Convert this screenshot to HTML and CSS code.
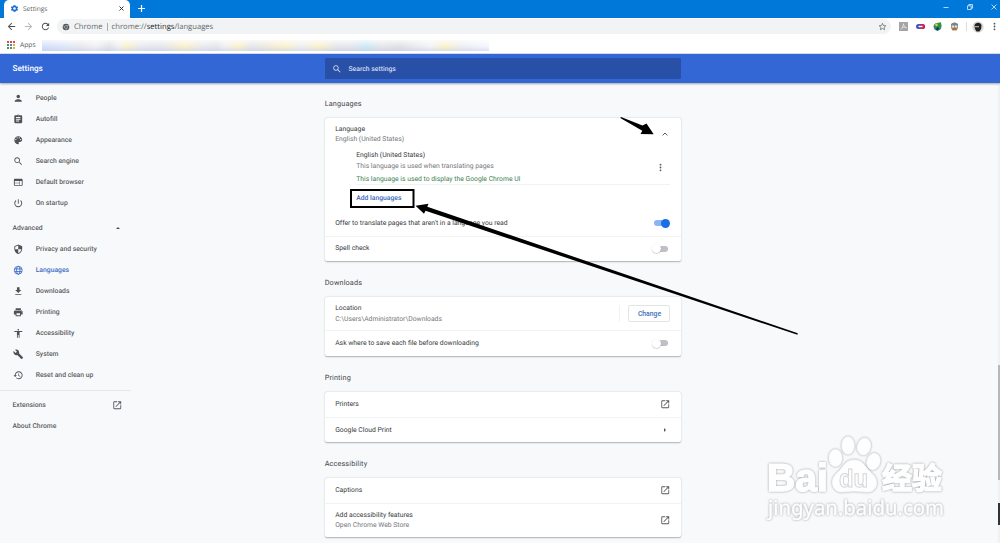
FILE: index.html
```html
<!DOCTYPE html>
<html lang="en">
<head>
  <meta charset="UTF-8">
  <title>Settings</title>
  <link rel="stylesheet" href="styles.css">
</head>
<body>
  <!-- icons -->
  <svg class="defs">
    <symbol id="person" viewBox="0 0 24 24"><path d="M12 12c2.21 0 4-1.79 4-4s-1.79-4-4-4-4 1.79-4 4 1.79 4 4 4zm0 2c-2.67 0-8 1.34-8 4v2h16v-2c0-2.66-5.33-4-8-4z"/></symbol>
    <symbol id="autofill" viewBox="0 0 24 24"><path d="M19 3h-4.18C14.4 1.84 13.3 1 12 1s-2.400.84-2.820 2H5c-1.100 0-2 .9-2 2v14c0 1.100.9 2 2 2h14c1.100 0 2-.9 2-2V5c0-1.100-.9-2-2-2zm-7 0c.55 0 1 .45 1 1s-.45 1-1 1-1-.45-1-1 .45-1 1-1zm2 14H7v-2h7v2zm3-4H7v-2h10v2zm0-4H7V7h10v2z"/></symbol>
    <symbol id="palette" viewBox="0 0 24 24"><path d="M12 3c-4.970 0-9 4.030-9 9s4.030 9 9 9c.83 0 1.500-.67 1.500-1.500 0-.39-.15-.74-.39-1.010-.23-.26-.38-.61-.38-.99 0-.83.67-1.500 1.500-1.500H16c2.760 0 5-2.240 5-5 0-4.420-4.030-8-9-8zm-5.500 9c-.83 0-1.500-.67-1.500-1.500S5.670 9 6.500 9 8 9.670 8 10.500 7.330 12 6.500 12zm3-4C8.670 8 8 7.330 8 6.500S8.670 5 9.500 5s1.500.67 1.500 1.500S10.330 8 9.500 8zm5 0c-.83 0-1.500-.67-1.500-1.500S13.670 5 14.500 5s1.500.67 1.500 1.500S15.330 8 14.500 8zm3 4c-.83 0-1.500-.67-1.500-1.500S16.670 9 17.500 9s1.500.67 1.500 1.500-.67 1.500-1.500 1.500z"/></symbol>
    <symbol id="search" viewBox="0 0 24 24"><path d="M15.500 14h-.79l-.28-.27C15.410 12.590 16 11.110 16 9.500 16 5.910 13.090 3 9.500 3S3 5.910 3 9.500 5.910 16 9.500 16c1.610 0 3.090-.59 4.230-1.570l.27.28v.79l5 4.990L20.490 19l-4.990-5zm-6 0C7.010 14 5 11.990 5 9.500S7.010 5 9.500 5 14 7.010 14 9.500 11.990 14 9.500 14z"/></symbol>
    <symbol id="browser" viewBox="0 0 24 24"><path d="M20 4H4c-1.100 0-2 .9-2 2v12c0 1.100.9 2 2 2h16c1.100 0 2-.9 2-2V6c0-1.100-.9-2-2-2zm-5 14H4v-4h11v4zm0-5H4V9h11v4zm5 5h-4V9h4v9z"/></symbol>
    <symbol id="power" viewBox="0 0 24 24"><path d="M13 3h-2v10h2V3zm4.830 2.170l-1.420 1.420C17.990 7.860 19 9.810 19 12c0 3.870-3.130 7-7 7s-7-3.130-7-7c0-2.190 1.010-4.140 2.580-5.420L6.170 5.170C4.230 6.820 3 9.260 3 12c0 4.970 4.030 9 9 9s9-4.030 9-9c0-2.740-1.230-5.180-3.170-6.830z"/></symbol>
    <symbol id="shield" viewBox="0 0 24 24"><path d="M12 1L3 5v6c0 5.550 3.840 10.740 9 12 5.160-1.260 9-6.450 9-12V5l-9-4zm0 10.990h7c-.53 4.120-3.280 7.790-7 8.940V12H5V6.300l7-3.110v8.800z"/></symbol>
    <symbol id="globe" viewBox="0 0 24 24"><g fill="none" stroke="currentColor" stroke-width="2"><circle cx="12" cy="12" r="9"/><ellipse cx="12" cy="12" rx="4" ry="9"/><path d="M3.500 9h17M3.500 15h17"/></g></symbol>
    <symbol id="download" viewBox="0 0 24 24"><path d="M19 9h-4V3H9v6H5l7 7 7-7zM5 18v2h14v-2H5z"/></symbol>
    <symbol id="print" viewBox="0 0 24 24"><path d="M19 8H5c-1.660 0-3 1.340-3 3v6h4v4h12v-4h4v-6c0-1.660-1.340-3-3-3zm-3 11H8v-5h8v5zm3-7c-.55 0-1-.45-1-1s.45-1 1-1 1 .45 1 1-.45 1-1 1zm-1-9H6v4h12V3z"/></symbol>
    <symbol id="access" viewBox="0 0 24 24"><path d="M12 2c1.100 0 2 .9 2 2s-.9 2-2 2-2-.9-2-2 .9-2 2-2zm9 7h-6v13h-2v-6h-2v6H9V9H3V7h18v2z"/></symbol>
    <symbol id="wrench" viewBox="0 0 24 24"><path d="M22.700 19l-9.100-9.100c.9-2.300.4-5-1.500-6.900-2-2-5-2.400-7.400-1.300L9 6 6 9 1.600 4.700C.4 7.100.9 10.100 2.900 12.100c1.900 1.900 4.600 2.400 6.900 1.500l9.100 9.100c.4.4 1 .4 1.400 0l2.300-2.300c.5-.4.5-1.100.1-1.400z"/></symbol>
    <symbol id="restore" viewBox="0 0 24 24"><path d="M13 3c-4.970 0-9 4.030-9 9H1l3.890 3.890.07.14L9 12H6c0-3.870 3.130-7 7-7s7 3.130 7 7-3.130 7-7 7c-1.930 0-3.680-.79-4.940-2.060l-1.420 1.420C8.270 19.990 10.510 21 13 21c4.970 0 9-4.030 9-9s-4.030-9-9-9zm-1 5v5l4.280 2.540.72-1.210-3.500-2.080V8H12z"/></symbol>
    <symbol id="launch" viewBox="0 0 24 24"><path d="M19 19H5V5h7V3H5c-1.110 0-2 .9-2 2v14c0 1.100.89 2 2 2h14c1.100 0 2-.9 2-2v-7h-2v7zM14 3v2h3.590l-9.830 9.830 1.410 1.410L19 6.410V10h2V3h-7z"/></symbol>
    <symbol id="dots" viewBox="0 0 24 24"><circle cx="12" cy="4.500" r="2.400"/><circle cx="12" cy="12" r="2.400"/><circle cx="12" cy="19.500" r="2.400"/></symbol>
    <symbol id="back" viewBox="0 0 24 24"><path d="M20 11H7.830l5.590-5.590L12 4l-8 8 8 8 1.410-1.410L7.830 13H20v-2z"/></symbol>
    <symbol id="reload" viewBox="0 0 24 24"><path d="M17.650 6.350C16.200 4.900 14.210 4 12 4c-4.420 0-7.990 3.580-7.990 8s3.570 8 7.990 8c3.730 0 6.840-2.550 7.730-6h-2.080c-.82 2.330-3.040 4-5.650 4-3.310 0-6-2.690-6-6s2.690-6 6-6c1.660 0 3.140.69 4.220 1.780L13 11h7V4l-2.350 2.350z"/></symbol>
    <symbol id="star" viewBox="0 0 24 24"><path d="M12 3.500l2.500 5.900 6.500.6-4.900 4.300 1.500 6.300-5.600-3.400-5.600 3.400 1.500-6.300L3 10l6.500-.6z" fill="none" stroke="currentColor" stroke-width="2"/></symbol>
    <symbol id="gear" viewBox="0 0 24 24"><path fill-rule="evenodd" d="M19.400 13a7.500 7.500 0 0 0 0-2l2.100-1.600-2-3.500-2.500 1a7.300 7.300 0 0 0-1.700-1L15 3.200h-6l-.4 2.700a7.300 7.300 0 0 0-1.700 1l-2.500-1-2 3.500L4.600 11a7.500 7.500 0 0 0 0 2l-2.200 1.600 2 3.500 2.500-1a7.300 7.300 0 0 0 1.700 1l.4 2.700h6l.4-2.700a7.300 7.300 0 0 0 1.700-1l2.500 1 2-3.500zM12 15.500a3.500 3.500 0 1 1 0-7 3.500 3.500 0 0 1 0 7z"/></symbol>
    <symbol id="chrome" viewBox="0 0 24 24"><circle cx="12" cy="12" r="10"/><circle cx="12" cy="12" r="4.500" fill="none" stroke="#c4c7ca" stroke-width="1.500"/><path d="M12 7.500h9M8 14.500L4 7M16 14.500L11.500 22" stroke="#c4c7ca" stroke-width="1.500"/></symbol>
  </svg>

  <div class="tabstrip">
    <div class="tab">
      <svg class="tab-icon"><use href="#gear"/></svg>
      <span>Settings</span>
      <svg class="tab-close" viewBox="0 0 5 5"><path d="M.5 .5l4 4M4.500 .5l-4 4"/></svg>
    </div>
    <svg class="new-tab" viewBox="0 0 7 7"><path d="M3.500 0v7M0 3.500h7"/></svg>
    <div class="window-buttons">
      <svg viewBox="0 0 6 6"><path d="M.5 3.500h5"/></svg>
      <svg viewBox="0 0 6 6"><path d="M.5 1.800h3.700v3.700H.5zM1.800 1.800V.5h3.700v3.700H4.200"/></svg>
      <svg viewBox="0 0 6 6"><path d="M.5 .5l5 5M5.500 .5l-5 5"/></svg>
    </div>
  </div>

  <div class="toolbar">
    <svg class="nav-icon"><use href="#back"/></svg>
    <svg class="nav-icon forward"><use href="#back"/></svg>
    <svg class="nav-icon"><use href="#reload"/></svg>
    <div class="omnibox">
      <svg class="site-icon"><use href="#chrome"/></svg>
      <span class="site">Chrome</span>
      <span class="url">chrome://<b>settings</b>/languages</span>
      <svg class="star"><use href="#star"/></svg>
    </div>
    <div class="extensions">
      <svg viewBox="0 0 9 9"><path fill="#a5a5a5" d="M0 0h9v9H0z"/><path d="M4.300 1.500c.5 2.800 1.500 4 3.400 4.600M4.500 2C4.300 4 3.300 6.300 1.700 7.500M2.800 5.700c1.500-.7 3-.8 4.700-.2" fill="none" stroke="#eee" stroke-width=".7"/></svg>
      <svg viewBox="0 0 9 9"><rect y="2" width="9" height="5" rx="2.500" fill="#3d55b8"/><path fill="#d51e55" d="M4.500 2h2a2.500 2.500 0 0 1 0 5h-2z"/><path d="M2.500 4.500h4" stroke="#fff" stroke-width="1.400"/></svg>
      <svg viewBox="0 0 9 9"><circle cx="4.500" cy="4.800" r="3.800" fill="#3478a8"/><path fill="#2c9440" d="M4 1l4-.7.600 4L6 8 4.500 5 1.500 6 .5 4z"/><path fill="#e7cd45" d="M2 2.500l2-1.300 1 2-2 1.300z"/><path fill="#183a35" d="M4 5l2 1-1 2.800L3 8z"/></svg>
      <svg viewBox="0 0 9 9"><path fill="#b98657" d="M1 2l3.500-1.500L8 2v4L6.500 8.500h-4L1 6z"/><path fill="#69899c" d="M1 2.500C2 .3 7 .3 8 2.500v1.200H1z"/><circle cx="3" cy="4.500" r="1.200" fill="#ddd"/><circle cx="6" cy="4.500" r="1.200" fill="#ddd"/><path d="M2.500 7h4" stroke="#765" /></svg>
    </div>
    <svg class="avatar" viewBox="0 0 12 12"><circle cx="6" cy="6" r="5.700" fill="#d8d9db"/><path fill="#222" d="M2.500 5c0-4 6.500-4.500 7-.5l-.3 3L7.500 10.500h-3L3 8z"/><path fill="#b99e88" d="M3 5h4v1.300H3z"/></svg>
    <svg class="menu"><use href="#dots"/></svg>
  </div>

  <div class="bookmarks">
    <svg class="apps" viewBox="0 0 8 8"><path fill="#d94e45" d="M0 0h2v2H0zM3 0h2v2H3zM6 0h2v2H6z"/><path fill="#43985f" d="M0 3h2v2H0zM0 6h2v2H0z"/><path fill="#4b7ed6" d="M3 3h2v2H3z"/><path fill="#dfb13b" d="M6 3h2v2H6zM6 6h2v2H6z"/><path fill="#43985f" d="M3 6h2v2H3z"/></svg>
    <span>Apps</span>
    <div class="hidden-links"></div>
  </div>

  <div class="header">
    <h1>Settings</h1>
    <div class="searchbox">
      <svg><use href="#search"/></svg>
      <span>Search settings</span>
    </div>
  </div>

  <div class="page">
    <div class="sidebar">
      <a class="item"><svg><use href="#person"/></svg>People</a>
      <a class="item"><svg><use href="#autofill"/></svg>Autofill</a>
      <a class="item"><svg><use href="#palette"/></svg>Appearance</a>
      <a class="item"><svg><use href="#search"/></svg>Search engine</a>
      <a class="item"><svg><use href="#browser"/></svg>Default browser</a>
      <a class="item"><svg><use href="#power"/></svg>On startup</a>
      <div class="advanced">Advanced <i class="up"></i></div>
      <a class="item"><svg><use href="#shield"/></svg>Privacy and security</a>
      <a class="item selected"><svg><use href="#globe"/></svg>Languages</a>
      <a class="item"><svg><use href="#download"/></svg>Downloads</a>
      <a class="item"><svg><use href="#print"/></svg>Printing</a>
      <a class="item"><svg><use href="#access"/></svg>Accessibility</a>
      <a class="item"><svg><use href="#wrench"/></svg>System</a>
      <a class="item"><svg><use href="#restore"/></svg>Reset and clean up</a>
      <div class="more">
        <a class="link">Extensions <svg><use href="#launch"/></svg></a>
        <a class="link">About Chrome</a>
      </div>
    </div>

    <div class="main">
      <h2>Languages</h2>
      <div class="card languages">
        <div class="row language">
          <div>
            <p>Language</p>
            <p class="sub">English (United States)</p>
          </div>
          <svg class="collapse" viewBox="0 0 6 4"><path d="M.6 3.400L3 1l2.400 2.400"/></svg>
        </div>
        <div class="nested">
          <div class="nested-row">
            <div>
              <p>English (United States)</p>
              <p class="sub">This language is used when translating pages</p>
              <p class="green">This language is used to display the Google Chrome UI</p>
            </div>
            <svg class="more-dots"><use href="#dots"/></svg>
          </div>
          <a class="add">Add languages</a>
        </div>
        <div class="row">
          <p>Offer to translate pages that aren't in a language you read</p>
          <div class="toggle on"></div>
        </div>
        <div class="row line">
          <p>Spell check</p>
          <div class="toggle"></div>
        </div>
      </div>

      <h2>Downloads</h2>
      <div class="card">
        <div class="row tall">
          <div>
            <p>Location</p>
            <p class="sub">C:\Users\Administrator\Downloads</p>
          </div>
          <div class="change"><button>Change</button></div>
        </div>
        <div class="row line">
          <p>Ask where to save each file before downloading</p>
          <div class="toggle"></div>
        </div>
      </div>

      <h2>Printing</h2>
      <div class="card">
        <div class="row"><p>Printers</p><svg class="launch"><use href="#launch"/></svg></div>
        <div class="row line"><p>Google Cloud Print</p><i class="right"></i></div>
      </div>

      <h2>Accessibility</h2>
      <div class="card">
        <div class="row"><p>Captions</p><svg class="launch"><use href="#launch"/></svg></div>
        <div class="row tall line">
          <div>
            <p>Add accessibility features</p>
            <p class="sub">Open Chrome Web Store</p>
          </div>
          <svg class="launch"><use href="#launch"/></svg>
        </div>
      </div>
    </div>

    <div class="scrollbar"><div class="thumb"></div><div class="mark"></div></div>
  </div>

  <!-- arrows and watermark over the page -->
  <svg class="overlay" viewBox="0 0 1000 543">
    <rect x="351" y="190" width="62.500" height="17" fill="none" stroke="#000" stroke-width="2"/>
    <path d="M415.500 205.700l13-2-1.200 3 370.500 126.600-.4 1.500L425.500 210.800l-1.500 3z"/>
    <path d="M621 117l21.500 8.600 4-2.200 7.200 10.800-13.200-.2 1.800-3.200-22-12.800z"/>
    <g class="watermark">
      <text x="767" y="491" font-size="39" textLength="61" lengthAdjust="spacingAndGlyphs" class="bold">Bai</text>
      <ellipse cx="835.500" cy="458" rx="6.500" ry="8.500"/>
      <ellipse cx="848" cy="445.500" rx="6.200" ry="8.700"/>
      <ellipse cx="864" cy="446.500" rx="6.500" ry="8.500" transform="rotate(12 864 446.500)"/>
      <ellipse cx="873.500" cy="461.500" rx="6.500" ry="8.200" transform="rotate(15 873.500 461.500)"/>
      <path d="M854 460c8 0 10 5 14 9.500s8.500 7 8.500 13.500c0 6-4 9-9.500 9s-8-1-13-1-8 1-12 1c-6 0-9.500-4-9.500-9.500 0-7 5-9 8.500-13.500s6-9 13-9z"/>
      <text x="839" y="486.500" font-size="25" textLength="29" lengthAdjust="spacingAndGlyphs" class="bold du">du</text>
      <text x="882" y="488.500" font-size="30" textLength="60" lengthAdjust="spacingAndGlyphs" class="bold">经验</text>
      <text x="768" y="514.500" font-size="20.500" textLength="176" lengthAdjust="spacingAndGlyphs" class="site-name">jingyan.baidu.com</text>
    </g>
  </svg>
</body>
</html>
```

FILE: styles.css
```css
* {
  box-sizing: border-box;
}
body {
  margin: 0;
  width: 1000px;
  height: 543px;
  overflow: hidden;
  position: relative;
  background: #f8f9fb;
  font-family: Roboto, "Liberation Sans", sans-serif;
  font-size: 6.8px;
  color: #36393c;
  text-rendering: geometricPrecision;
}
h1, h2, p {
  margin: 0;
}
svg {
  flex: none;
  fill: currentColor;
}
.defs {
  position: absolute;
  width: 0;
  height: 0;
}

/* Browser window */
.tabstrip {
  display: flex;
  align-items: center;
  height: 17.500px;
  background: #0078d9;
  color: #fff;
}
.tab {
  display: flex;
  align-items: center;
  width: 126px;
  height: 18px;
  margin-left: 4px;
  padding: 0 6px;
  background: #fff;
  border-radius: 5px 5px 0 0;
  color: #55585b;
  font-family: "Open Sans", sans-serif;
  font-size: 6.6px;
}
.tab-icon {
  width: 9px;
  height: 9px;
  margin-right: 4px;
  color: #1a68d2;
}
.tab-close {
  width: 5px;
  height: 5px;
  margin-left: auto;
  stroke: #333;
}
.new-tab {
  width: 7px;
  height: 7px;
  margin-left: 8px;
  stroke: #fff;
  stroke-width: 1.2;
}
.window-buttons {
  display: flex;
  gap: 18px;
  margin: -3px 3.500px 0 auto;
}
.window-buttons svg {
  width: 6px;
  height: 6px;
  fill: none;
  stroke: #fff;
  stroke-width: .7;
}
.toolbar {
  display: flex;
  align-items: center;
  height: 18.500px;
  padding: 0 1px 0 6px;
  background: #fff;
  color: #4d5053;
}
.nav-icon {
  width: 11px;
  height: 11px;
  margin-right: 6px;
}
.forward {
  color: #b5b7b9;
  transform: scaleX(-1);
}
.omnibox {
  display: flex;
  align-items: center;
  width: 836px;
  height: 15px;
  padding: 0 4px 0 5px;
  border-radius: 8px;
  background: #f1f3f4;
  font-family: "Open Sans", sans-serif;
  font-size: 7.650px;
  color: #65686c;
}
.site-icon {
  width: 8px;
  height: 8px;
  margin-right: 4px;
  color: #55585b;
}
.site {
  padding-right: 4px;
  border-right: 1px solid #aaa;
  line-height: 8px;
}
.url {
  margin-left: 4px;
}
.url b {
  font-weight: 500;
  color: #25282b;
}
.star {
  width: 9px;
  height: 9px;
  margin-left: auto;
}
.extensions {
  display: flex;
  gap: 8px;
  margin-left: 8px;
  padding-right: 7px;
  border-right: 1px solid #ddd;
}
.extensions svg {
  width: 9px;
  height: 9px;
}
.avatar {
  width: 12px;
  height: 12px;
  margin-left: 5px;
}
.menu {
  width: 9px;
  height: 9px;
  margin-left: 6px;
}
.bookmarks {
  display: flex;
  align-items: center;
  height: 18px;
  padding-left: 7px;
  background: #fff;
  border-bottom: 1px solid #dce0e8;
  font-family: "Open Sans", sans-serif;
  font-size: 6.7px;
  color: #505356;
}
.apps {
  width: 8px;
  height: 8px;
  margin-right: 5px;
}
.hidden-links {
  width: 447px;
  height: 11px;
  margin: 1px 0 0 6px;
  background:
    linear-gradient(rgba(255,255,255,.75), rgba(255,255,255,.1) 55%, rgba(190,200,230,.45)),
    linear-gradient(90deg, #cfdffb, #dfe7f6 6%, #e8e8ea 9%, #f0f1f5 12%, #e1e2e6 15%, #f0f0f3 17%, #fbf0c6 19%, #e8e9ee 22%, #e4e5ea 27%, #fbf0c6 32%, #e8e9ee 36%, #e4e5ea 39%, #f0f0f3 41%, #fbf0c6 44%, #e4e5ea 47%, #fbf0c6 54.500%, #eceef2 58%, #fbf0c6 62%, #e4e5ea 66%, #e4e5ea 69%, #c8e8f5 72.500%, #e5e5e8 76%, #dedfe4 80%, #f2f3f8 87%, #fbf0c6 90%, #eceef2 94%, #f5f7ff);
}

/* Settings header */
.header {
  display: flex;
  align-items: center;
  position: relative;
  height: 29px;
  background: #3367d6;
  box-shadow: 0 1px 2px rgba(0, 0, 0, .35);
  color: #fff;
}
.header h1 {
  width: 312px;
  margin-left: 12.500px;
  font-size: 8.2px;
  font-weight: 500;
}
.searchbox {
  display: flex;
  align-items: center;
  width: 356.500px;
  height: 21px;
  padding-left: 7px;
  border-radius: 1px;
  background: #2850a7;
  color: #d5def1;
  font-weight: 500;
  font-size: 6.8px;
}
.searchbox svg {
  width: 10px;
  height: 10px;
  margin-right: 7px;
}
.page {
  display: flex;
  height: 460px;
}

/* Sidebar */
.sidebar {
  width: 131px;
  margin-right: 193.700px;
  padding-top: 4.500px;
  color: #5a5d61;
  font-weight: 500;
}
.item {
  display: flex;
  align-items: center;
  height: 21px;
  padding-left: 12.500px;
}
.item svg {
  width: 10.500px;
  height: 10.500px;
  margin-right: 12.700px;
  color: #4e5155;
}
.selected, .item.selected svg {
  color: #3b6cc4;
}
.advanced {
  display: flex;
  align-items: center;
  justify-content: space-between;
  height: 25px;
  margin-top: 2px;
  padding: 0 11.500px 0 12.500px;
  margin-bottom: -2px;
}
.up {
  border: 2.500px solid transparent;
  border-top: 0;
  border-bottom: 2.500px solid #4e5155;
}
.more {
  margin-top: 4px;
  padding-top: 4px;
  border-top: 1px solid #e6e8ea;
}
.link {
  display: flex;
  align-items: center;
  justify-content: space-between;
  height: 21px;
  padding: 0 9px 0 12.500px;
}
.link svg, .launch {
  width: 10.500px;
  height: 10.500px;
  color: #55585c;
}

/* Settings sections */
.main {
  width: 356.300px;
  padding-top: 14px;
}
h2 {
  height: 21px;
  line-height: 13px;
  font-size: 7.3px;
  font-weight: 400;
  letter-spacing: .13px;
  color: #44474b;
}
.card {
  margin-bottom: 15px;
  background: #fff;
  border-radius: 2px;
  box-shadow: 0 .5px 1.500px rgba(60, 64, 67, .4);
}
.card p {
  line-height: 10.600px;
}
.row {
  display: flex;
  align-items: center;
  justify-content: space-between;
  height: 25.200px;
  padding: 0 10.500px;
}
.language {
  height: 32.500px;
}
.tall {
  height: 33.500px;
}
.line {
  border-top: 1px solid #f1f2f4;
}
.card .sub {
  color: #74777b;
}
.card .green {
  margin-top: 2px;
  color: #3c8150;
}
.collapse {
  width: 6px;
  height: 4px;
  margin-right: 2.500px;
  fill: none;
  stroke: #55585c;
}
.nested {
  height: 60px;
  padding: 0 10.500px 0 31.500px;
}
.nested-row {
  display: flex;
  align-items: center;
  justify-content: space-between;
  height: 34.500px;
  border-bottom: 1px solid #f1f2f4;
}
.more-dots {
  width: 9px;
  height: 9px;
  margin-right: 5.500px;
  color: #55585c;
}
.add {
  display: block;
  line-height: 26px;
  font-weight: 500;
  color: #3b66bd;
}
.toggle {
  position: relative;
  width: 14px;
  height: 6px;
  margin-right: 2px;
  border-radius: 3px;
  background: #bdc1c6;
}
.toggle::before {
  content: "";
  position: absolute;
  left: -2px;
  top: -1.500px;
  width: 9px;
  height: 9px;
  border-radius: 50%;
  background: #fff;
  box-shadow: 0 .5px 1px rgba(60, 64, 67, .4);
}
.on {
  background: #8cb4f2;
}
.on::before {
  left: 7px;
  background: #1a6ee6;
  box-shadow: none;
}
.change {
  padding-left: 8px;
  border-left: 1px solid #f1f2f4;
}
button {
  display: block;
  width: 42px;
  height: 17px;
  padding: 0;
  border: 1px solid #e2e4e7;
  border-radius: 2px;
  background: #fff;
  font: 500 6.8px Roboto, sans-serif;
  color: #3b70b9;
}
.right {
  margin-right: 4px;
  border: 2px solid transparent;
  border-right: 0;
  border-left: 2.500px solid #55585c;
}
.scrollbar {
  width: 2px;
  margin-left: auto;
  padding-top: 282px;
  background: #f1f1f1;
}
.thumb {
  height: 115px;
  background: #b8b8b8;
}
.mark {
  height: 22px;
  margin-top: 23px;
  background: #333;
}

/* Drawn over the page */
.overlay {
  position: absolute;
  left: 0;
  top: 0;
  width: 1000px;
  height: 543px;
  fill: #000;
}
.watermark {
  fill: #fefefe;
  stroke: #fefefe;
  stroke-width: .8;
  font-family: "Liberation Sans", "Noto Sans CJK SC", sans-serif;
  filter: drop-shadow(0 0 .8px #999da1);
}
.bold {
  font-weight: bold;
  stroke-width: 1.5;
}
.du {
  stroke: #d3d5d8;
  stroke-width: 1;
}
.site-name {
  font-family: "Noto Sans", sans-serif;
  stroke-width: .4;
}
```
